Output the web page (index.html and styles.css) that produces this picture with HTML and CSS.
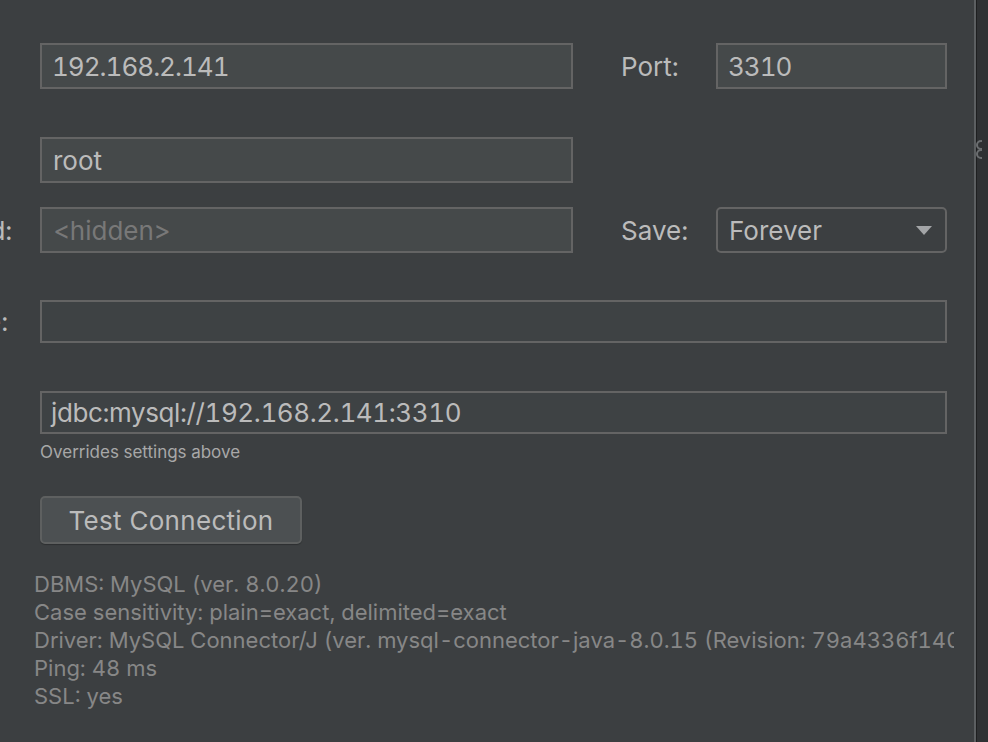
FILE: index.html
```html
<!DOCTYPE html>
<html lang="en">
<head>
<meta charset="utf-8">
<title>Data Source Settings</title>
<link rel="stylesheet" href="styles.css">
</head>
<body>
<div class="window">
  <main class="main">
    <div class="form">
      <div class="row row-host">
        <span class="label">Host:</span>
        <div class="field field-main"><span class="value num">192.168.2.141</span></div>
        <span class="label label2">Port:</span>
        <div class="field field-side"><span class="value num">3310</span></div>
      </div>
      <div class="row row-user">
        <span class="label">User:</span>
        <div class="field field-main"><span class="value">root</span></div>
      </div>
      <div class="row row-pass">
        <span class="label">Password:</span>
        <div class="field field-main"><span class="value placeholder">&lt;hidden&gt;</span></div>
        <span class="label label2">Save:</span>
        <div class="select field-side">
          <span class="value">Forever</span>
          <svg class="arrow" width="16" height="9" viewBox="0 0 16 9"><path d="M0 0h16L8 9z" fill="#a3a5a7"/></svg>
        </div>
      </div>
      <div class="row row-db">
        <span class="label">Database:</span>
        <div class="field field-wide short"></div>
      </div>
      <div class="row row-url">
        <span class="label">URL:</span>
        <div class="field field-wide short"><span class="value url">jdbc:mysql://192.168.2.141:3310</span></div>
      </div>
      <div class="hint">Overrides settings above</div>
      <div class="btn-row">
        <button class="btn">Test Connection</button>
      </div>
      <div class="info">
        <div>DBMS: MySQL (ver. 8.0.20)</div>
        <div>Case sensitivity: plain=exact, delimited=exact</div>
        <div>Driver: MySQL Connector/J (ver. mysql-connector-java-8.0.15 (Revision: 79a4336f140499bd22dd07f02b708e163844e3d5))</div>
        <div>Ping: 48 ms</div>
        <div>SSL: yes</div>
      </div>
    </div>
  </main>
  <aside class="side">
    <svg class="side-glyph" width="9" height="20" viewBox="0 0 9 20"><circle cx="8" cy="5" r="4" fill="none" stroke="#6b6e70" stroke-width="2"/><circle cx="8" cy="14" r="4" fill="none" stroke="#6b6e70" stroke-width="2"/></svg>
  </aside>
</div>
</body>
</html>
```

FILE: styles.css
```css
html, body {
  margin: 0;
  padding: 0;
  background: #3c3f41;
  width: 988px;
  height: 742px;
  overflow: hidden;
  font-family: "Inter", "Liberation Sans", sans-serif;
  font-variant-numeric: tabular-nums;
  color: #bbbbbb;
}

.window {
  display: flex;
  width: 988px;
  height: 742px;
}

.main {
  width: 976px;
  flex: none;
  overflow: hidden;
  border-right: 2px solid #5c5f61;
  box-sizing: border-box;
}

.side {
  flex: 1;
  background: #2f3133;
  border-left: 1px solid #1e1f20;
  padding-top: 140px;
}

.side-glyph {
  display: block;
  margin-left: -4px;
}

.form {
  margin-left: -115px;
  padding-top: 43px;
}

.row {
  display: grid;
  grid-template-columns: 155px 533px 48px 95px 231px;
  align-items: center;
}

.row-user { margin-top: 48px; }
.row-pass { margin-top: 24px; }
.row-db { margin-top: 47px; }
.row-url { margin-top: 48px; }

.label {
  font-size: 26px;
  color: #bbbbbb;
  white-space: nowrap;
}

.label2 {
  grid-column: 4;
}

.field {
  height: 46px;
  box-sizing: border-box;
  background: #45494a;
  border: 2px solid #646464;
  display: flex;
  align-items: center;
  padding-left: 11px;
}

.field-main { grid-column: 2; }
.field-side { grid-column: 5; }
.field-wide { grid-column: 2 / 6; }

.short { height: 43px; background: #3e4244; }

.value {
  font-size: 26px;
  color: #bbbbbb;
  white-space: nowrap;
}

.num { letter-spacing: -1px; margin-left: -1px; }

.url { margin-left: -2px; letter-spacing: -0.4px; }

.placeholder { color: #787878; }

.select {
  height: 46px;
  box-sizing: border-box;
  border: 2px solid #646464;
  border-radius: 5px;
  background: #3c3f41;
  display: flex;
  align-items: center;
  justify-content: space-between;
  padding: 0 13px 0 11px;
}

.arrow { display: block; }

.hint {
  margin-left: 155px;
  margin-top: 8px;
  font-size: 17px;
  color: #a8a8a8;
}

.btn-row {
  margin-left: 155px;
  margin-top: 34px;
}

.btn {
  width: 262px;
  height: 48px;
  box-sizing: border-box;
  background: #4c5052;
  border: 2px solid #5e6060;
  border-radius: 5px;
  box-shadow: 0 1px 1px rgba(0,0,0,0.25);
  font-family: "Inter", "Liberation Sans", sans-serif;
  font-size: 26px;
  letter-spacing: 0.3px;
  color: #bbbbbb;
  padding: 0;
}

.info {
  margin-left: 149px;
  margin-top: 26px;
  font-size: 22px;
  line-height: 28px;
  color: #878787;
  white-space: nowrap;
  overflow: hidden;
  width: 920px;
}
```
